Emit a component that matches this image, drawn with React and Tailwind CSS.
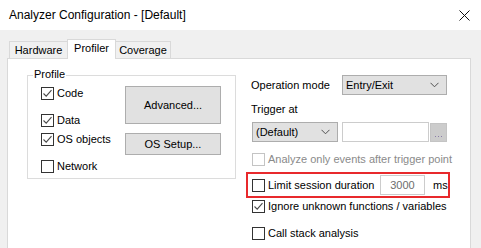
import React from "react";

function Check({ checked, disabled }) {
  return (
    <span
      className={
        "w-[13px] h-[13px] shrink-0 border bg-white flex items-center justify-center " +
        (disabled ? "border-[#c4c4c4]" : "border-[#333333]")
      }
    >
      {checked && (
        <svg width="11" height="11" viewBox="0 0 11 11">
          <path d="M1.5 5.5 L4.2 8.2 L9.5 2.2" fill="none" stroke="#4a4a4a" strokeWidth="1.1" />
        </svg>
      )}
    </span>
  );
}

function CheckRow({ label, checked, disabled, className = "" }) {
  return (
    <div className={"flex items-center h-[13px] " + className}>
      <Check checked={checked} disabled={disabled} />
      <span className={"ml-[3px] whitespace-nowrap leading-none " + (disabled ? "text-[#8a8a8a]" : "text-black")}>{label}</span>
    </div>
  );
}

function Chevron() {
  return (
    <svg width="9" height="6" viewBox="0 0 9 6">
      <path d="M0.5 0.8 L4.5 4.8 L8.5 0.8" fill="none" stroke="#505050" strokeWidth="1" />
    </svg>
  );
}

function Combo({ value, className = "" }) {
  return (
    <div className={"h-[20px] bg-[#e1e1e1] border border-[#adadad] flex items-center justify-between pl-[3px] pr-[7px] " + className}>
      <span className="leading-none">{value}</span>
      <Chevron />
    </div>
  );
}

export default function App() {
  return (
    <div
      className="w-[481px] h-[248px] overflow-hidden bg-[#f0f0f0] text-[11px] text-black"
      style={{ fontFamily: '"Liberation Sans", Arial, sans-serif' }}
    >
      <div className="h-[30px] bg-white flex items-center justify-between pl-[9px] pr-[11px]">
        <span className="text-[12px] leading-none">Analyzer Configuration - [Default]</span>
        <svg width="11" height="11" viewBox="0 0 11 11">
          <path d="M0.5 0.5 L10.5 10.5 M10.5 0.5 L0.5 10.5" stroke="#111" strokeWidth="1" />
        </svg>
      </div>

      <div className="pl-[7px] pt-[9px] w-[471px]">
        <div className="flex items-end h-[19px] pl-[2px]">
          <div className="w-[58px] h-[17px] border-l border-t border-[#d9d9d9] bg-[#f0f0f0] flex items-center justify-center">
            Hardware
          </div>
          <div className="relative z-10 w-[49px] h-[20px] -mb-[1px] border-l border-r border-t border-[#d9d9d9] bg-white flex items-center justify-center pb-[2px]">
            Profiler
          </div>
          <div className="w-[55px] h-[17px] border-r border-t border-[#d9d9d9] bg-[#f0f0f0] flex items-center justify-center">
            Coverage
          </div>
        </div>

        <div className="h-[200px] border border-[#d9d9d9] bg-white flex">
          {/* Profile group */}
          <div className="ml-[19px] mt-[16px] w-[209px] h-[104px] border border-[#dcdcdc] relative flex pl-[13px]">
            <span className="absolute -top-[7px] left-[5px] bg-white px-[1px] leading-none">Profile</span>
            <div className="flex flex-col w-[84px]">
              <CheckRow label="Code" checked className="mt-[11px]" />
              <CheckRow label="Data" checked className="mt-[14px]" />
              <CheckRow label="OS objects" checked className="mt-[6px]" />
              <CheckRow label="Network" className="mt-[14px]" />
            </div>
            <div className="flex flex-col">
              <div className="mt-[10px] w-[96px] h-[38px] bg-[#e1e1e1] border border-[#adadad] flex items-center justify-center">
                Advanced...
              </div>
              <div className="mt-[9px] w-[96px] h-[22px] bg-[#e1e1e1] border border-[#adadad] flex items-center justify-center">
                OS Setup...
              </div>
            </div>
          </div>

          {/* Right column */}
          <div className="ml-[15px] flex flex-col">
            <div className="mt-[16px] flex items-center">
              <span className="w-[91px] leading-none">Operation mode</span>
              <Combo value="Entry/Exit" className="w-[105px]" />
            </div>
            <div className="mt-[7px] h-[14px] leading-[14px]">Trigger at</div>
            <div className="mt-[6px] flex items-center">
              <Combo value="(Default)" className="w-[86px] ml-[1px]" />
              <div className="ml-[4px] w-[87px] h-[20px] border border-[#cccccc] bg-white" />
              <div className="ml-[1px] w-[17px] h-[19px] bg-[#cccccc] border border-[#c4c4c4] flex items-end justify-center pb-[4px] gap-[2px]">
                <span className="w-[1px] h-[1px] bg-[#8a7ca8]" />
                <span className="w-[1px] h-[1px] bg-[#8a7ca8]" />
                <span className="w-[1px] h-[1px] bg-[#8a7ca8]" />
              </div>
            </div>
            <CheckRow label="Analyze only events after trigger point" disabled className="mt-[11px] ml-[1px]" />
            <div className="mt-[6px] -ml-[5px] w-[204px] h-[26px] border-2 border-[#e8292c] flex items-center pl-[4px]">
              <Check />
              <span className="ml-[3px] leading-none w-[112px]">Limit session duration</span>
              <div className="w-[45px] h-[20px] border border-[#cccccc] bg-white flex items-center justify-center text-[#6d6d6d]">
                3000
              </div>
              <span className="ml-[8px] leading-none">ms</span>
            </div>
            <CheckRow label="Ignore unknown functions / variables" checked className="mt-[2px] ml-[1px]" />
            <CheckRow label="Call stack analysis" className="mt-[14px] ml-[1px]" />
          </div>
        </div>
      </div>
    </div>
  );
}
